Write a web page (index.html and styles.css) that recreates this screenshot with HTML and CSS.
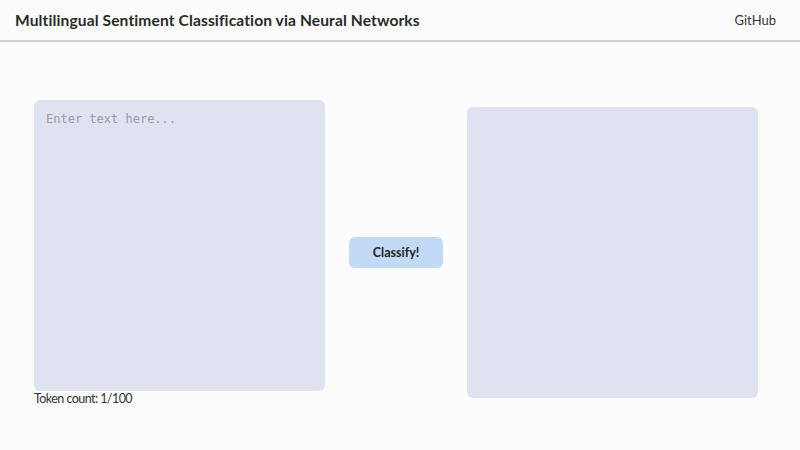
FILE: index.html
```html
<!DOCTYPE html>
<html>
<head>
<meta charset="utf-8">
<link rel="stylesheet" href="styles.css">
</head>
<body>
<header class="topbar">
  <h1 class="title">Multilingual Sentiment Classification via Neural Networks</h1>
  <a class="gh" href="#">GitHub</a>
</header>
<main class="main">
  <div class="input-col">
    <textarea class="input" placeholder="Enter text here..."></textarea>
    <div class="count">Token count: 1/100</div>
  </div>
  <button class="btn">Classify!</button>
  <div class="output"></div>
</main>
</body>
</html>
```
FILE: styles.css
```css
* { box-sizing: border-box; }
html, body { margin: 0; padding: 0; }
body {
  background: #fcfcfc;
  font-family: Lato, "Open Sans", sans-serif;
  color: #222;
  width: 800px;
  height: 450px;
  overflow: hidden;
}
.topbar {
  height: 42px;
  border-bottom: 2px solid #cfcfcf;
  display: flex;
  align-items: center;
  justify-content: space-between;
  padding: 0 24px 0 15px;
}
.title {
  margin: 0;
  font-size: 15.6px;
  font-weight: 700;
  color: #2a2a2a;
  letter-spacing: 0.1px;
}
.gh {
  font-size: 13px;
  color: #333;
  text-decoration: none;
}
.main {
  display: flex;
  align-items: center;
  gap: 24px;
  padding: 58px 0 0 34px;
}
.input-col {
  display: flex;
  flex-direction: column;
}
.input {
  width: 291px;
  height: 291px;
  background: #dfe2f0;
  border: none;
  border-radius: 6px;
  resize: none;
  padding: 12px 12px;
  font-family: "DejaVu Sans Mono", monospace;
  font-size: 12px;
  color: #333;
  outline: none;
}
.input::placeholder { color: #9a9ca6; }
.count {
  font-size: 12.5px;
  letter-spacing: -0.55px;
  color: #333;
  line-height: 13px;
  padding-top: 1px;
}
.btn {
  width: 94px;
  height: 31px;
  background: #c2daf5;
  border: none;
  border-radius: 6px;
  font-family: Lato, sans-serif;
  font-weight: 700;
  font-size: 12.5px;
  color: #222;
}
.output {
  width: 291px;
  height: 291px;
  background: #dfe2f0;
  border-radius: 6px;
}
```
